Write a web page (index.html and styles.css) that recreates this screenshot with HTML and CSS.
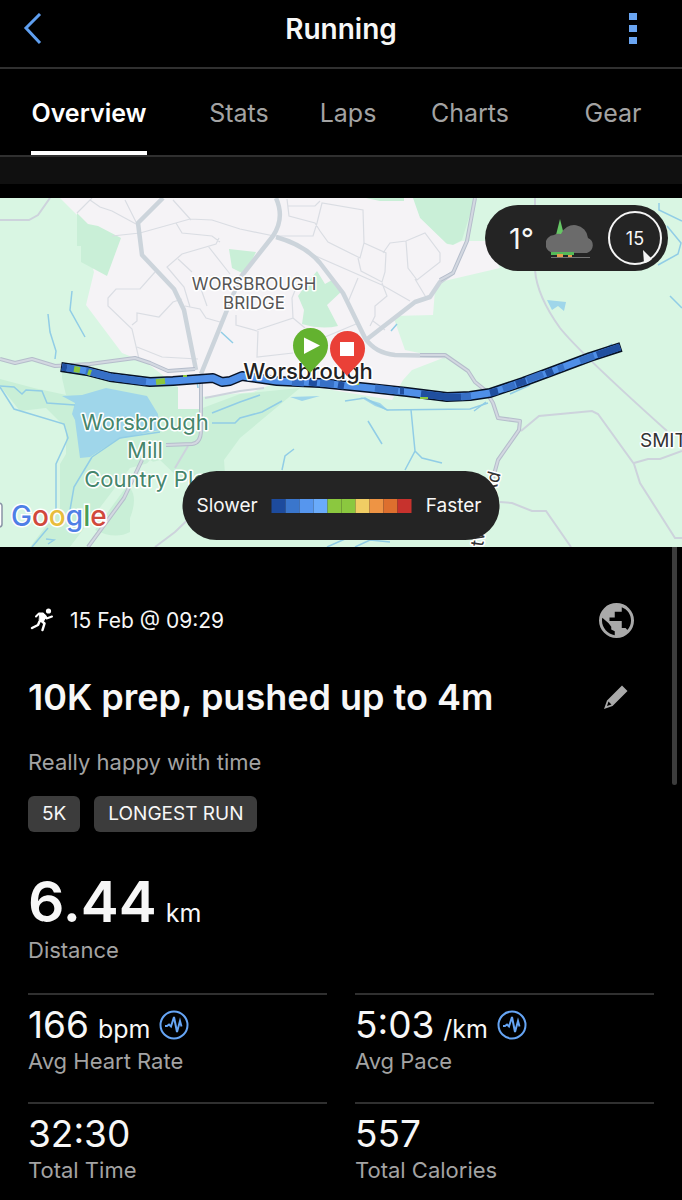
FILE: index.html
```html
<!DOCTYPE html>
<html lang="en">
<head>
<meta charset="utf-8">
<meta name="viewport" content="width=device-width, initial-scale=1">
<title>Running</title>
<link rel="stylesheet" href="styles.css">
</head>
<body>
<header class="topbar">
  <button class="icon-btn" aria-label="Back">
    <svg width="20" height="32" viewBox="0 0 20 32" fill="none" stroke="#5f9ff0" stroke-width="3"><path d="M17 1 3 15l14 15"/></svg>
  </button>
  <h1 class="topbar-title">Running</h1>
  <button class="icon-btn" aria-label="More options">
    <svg width="8" height="32" viewBox="0 0 8 32" fill="#6aa5f2"><path d="M0 0h8v7H0zM0 12h8v7H0zM0 24h8v7H0z"/></svg>
  </button>
</header>

<nav class="tabs" aria-label="Activity sections">
  <a class="tab tab-active" href="#overview" aria-current="page">Overview</a>
  <a class="tab" href="#stats">Stats</a>
  <a class="tab" href="#laps">Laps</a>
  <a class="tab" href="#charts">Charts</a>
  <a class="tab" href="#gear">Gear</a>
</nav>
<div class="strip"></div>

<main id="overview">
  <section class="map" aria-label="Route map">
    <svg class="map-canvas" viewBox="0 0 682 349" preserveAspectRatio="xMidYMid slice">
      <rect width="682" height="349" fill="#d9f6e3"/>
      <!-- woodland -->
      <g fill="#c9efd7">
        <path d="M412 0H475L462 42 453 47 440 44 447 47 420 20Z"/>
        <path d="M0 181 34 190 66 197 62 180 62 172 150 185 178 189V211H200L240 196 300 190 240 240 224 262 226 290H200L150 262 136 278 134 308 126 338 108 334 96 322 108 300 70 349H30L60 310V266L66 256 66 230 46 210 20 213 0 188Z"/>
      </g>
      <path d="M70 349 130 270 160 262 200 300 200 349Z" fill="#d9f6e3"/>
      <path d="M130 320q8-20 0-30l10-20-35 48-10 14q20 10 35 2Z" fill="#c9efd7"/>
      <!-- built-up area -->
      <path fill="#f5f3f6" d="M60 0 77 17 94 74 86 107 122 155 147 165 178 189V211H200V199L253 194 270 187 320 190 392 202 403 182 412 172 443 160 405 152 393 118 433 117 435 92 440 84 500 70 487 43H462L453 47 447 46 420 20 413 0Z"/>
      <g fill="#c9efd7">
        <path d="M77 15 88 26 98 28 121 40 107 78 81 64V48L77 48Z"/>
        <path d="M229 51 256 54 252 62 242 75 232 70Z"/>
        <path d="M317 73 325 86 332 82 343 92 327 107 338 128Q322 132 302 126L304 112 298 98 308 84Z"/>
        <path d="M366 0H404V3H380Z"/>
      </g>
      <!-- lake -->
      <path fill="#9fd6ea" d="M62 198 82 197 106 190 147 198 158 216 160 232 118 241 90 259 80 260 75 222 72 216 75 205Z"/>
      <path fill="#9fd6ea" d="M290 199 320 198 302 203ZM360 199l20 6 9 8-14-5ZM547 102l19 2-2 9-6-5-6 4Z"/>
      <!-- streams -->
      <g fill="none" stroke="#91cde6" stroke-width="1.5">
        <path d="M72 93 70 112 85 139M48 116 50 134 56 153 55 161M221 134 233 145"/>
        <path d="M0 188 14 189 22 196 26 192 42 193 47 205 75 207M0 189 14 211 64 226 68 240 56 266V312M92 259 74 289 70 312M48 330 32 349M46 341l8 1-6 4"/>
        <path d="M160 234 120 240 92 259M212 215 240 204 260 197M212 225 235 225 240 220 262 214 282 203M345 203 365 200 387 212 470 211 488 205M368 223 382 246M411 212 415 253 405 272M415 253 422 260 442 265M282 272 285 258 294 251"/>
        <path d="M659 5v7l23 11M667 28 681 45 678 56 658 67M670 98l12 12M510 196 530 187M592 160 612 146M474 213l12-9M391 133l6-7M196 176l2 14M327 349 345 341M355 349 370 342 390 344"/>
      </g>
      <!-- minor streets -->
      <g fill="none" stroke="#dadde3" stroke-width="1.2">
        <path d="M112 38 140 35 190 21 212 22 240 31 274 38M77 15 92 0M90 2 100 9 112 13 136 26M125 2l12 24M173 2l18 20M176 25l6 10 30 3 8 6M219 40l-3 6-34 10-15 13 17 20 6 20M208 48l22 28M155 74 140 91H116L108 100V108L132 131 139 161M132 127l5-4v-8l22 4 14-15 9-3M185 108l15 3 6 9 14 4M137 149l25 10 36 2M178 61l14 13M201 91l6 17"/>
        <path d="M287 1 289 18 315 25 320 33 328 44 360 60 364 45 363 12 322 5 317 25 313 38H275M288 8H315L320 3M364 45 386 55 385 74 382 84 361 73 358 60M383 55 390 45 406 43 425 35 440 55V64L417 82 408 70 406 43M415 81 427 101M311 56 382 87 410 103M358 80 348 104M382 85 387 98 375 108V118L370 128M258 133 257 159 293 155M257 132 293 120 292 100 298 85M236 117v10l21 6M373 123l12 9M293 120l12 10M325 139l31-13"/>
      </g>
      <g fill="none" stroke="#cdd3dc" stroke-width="2">
        <path d="M535 0V72Q537 98 560 130 580 155 667 233"/>
        <path d="M521 233 539 218 592 213 598 216 634 266 640 285 675 340H682M634 265 648 261 660 261 682 253M500 304 512 305 532 313H546L571 349"/>
        <path d="M0 22H29L38 17 50 0M155 349 175 334 200 310M175 270 188 248M205 200 240 193 264 190"/>
      </g>
      <!-- main roads -->
      <g fill="none" stroke="#ccd4db" stroke-width="4.5" stroke-linejoin="round">
        <path d="M163 0 138 25 142 57 174 91 184 112 196 172M276 0Q285 20 273 38L240 80 201 176M276 39Q305 47 320 65L343 95 365 140Q375 155 395 157L445 158M366 142 415 104 430 99 440 84 454 74"/>
      </g>
      <g fill="none" stroke="#b5bdcb" stroke-width="4" stroke-linejoin="round">
        <path d="M0 161 15 165 32 161 55 168 90 166 135 160 150 165 168 173 195 171M475 0 467 43 453 75 440 82M420 157H445L468 173 475 184 485 192 493 205 498 220 520 223 519 232 498 262 493 280M201 178 201 232Q201 245 192 246L166 247M142 262 124 300 88 349"/>
      </g>
      <g fill="none" stroke="#d3d8e1" stroke-width="2" stroke-linejoin="round">
        <path d="M0 161 15 165 32 161 55 168 90 166 135 160 150 165 168 173 195 171M475 0 467 43 453 75 440 82M420 157H445L468 173 475 184 485 192 493 205 498 220 520 223 519 232 498 262 493 280M201 178 201 232Q201 245 192 246L166 247M142 262 124 300 88 349"/>
      </g>
      <!-- recorded route -->
      <g fill="none" stroke-linejoin="round">
        <path stroke="#071226" stroke-width="10" d="M61 169 87 173 110 179 150 184 173 183 213 180 222 184 230 183 242 178 277 183 320 185 370 190 407 194 447 199 470 198 490 195 523 184 550 174 590 159 621 149"/>
        <path stroke="#4f8fe8" stroke-width="7" d="M62 169 87 173 110 179 150 184 173 183 213 180 222 184 230 183 242 178 277 183 320 185 370 190 407 194 447 199 470 198 490 195 523 184 550 174 590 159 620 149"/>
        <path stroke="#204f9f" stroke-width="7" d="M62 169l5 1M309 184l8 1M338 187l6 1M400 193l4 0M421 196l26 3 14 0M490 195l8-2M516 186l10-3M546 176l7-3M597 157l23-8"/>
        <path stroke="#3770c6" stroke-width="7" d="M67 170l8 1M86 173l24 6 36 5M292 184l12 1M320 185l14 1M375 190l23 3M461 199l10-1M503 191l12-4M527 182l16-6M558 171l6-2M580 163l14-5"/>
        <path stroke="#8bc63e" stroke-width="6" d="M74 171l6 1M88 174l3 1M156 184l9-1"/>
        <path stroke="#8bc63e" stroke-width="2" d="M183 178h4M353 186h6M420 200h8"/>
      </g>
      <!-- place names -->
      <g class="place">
        <g class="district">
          <text x="254" y="92">WORSBROUGH</text>
          <text x="254" y="111">BRIDGE</text>
        </g>
        <text class="district-cut" x="640" y="249">SMIT</text>
        <text class="town" x="308" y="181">Worsbrough</text>
        <g class="park">
          <text x="145" y="232">Worsbrough</text>
          <text x="145" y="260">Mill</text>
          <text x="145" y="289">Country Plc</text>
        </g>
        <text class="road-name" transform="translate(495 297) rotate(-75)">Rd</text>
        <text class="road-name" transform="translate(483 349) rotate(-82)">tw</text>
      </g>
      <!-- start and finish pins -->
      <path fill="#63b22f" d="M310 175 298 161Q293 155 293 147.500A17.500 17.500 0 0 1 328 147.500Q328 155 323 161Z"/>
      <path fill="#fff" d="M304 139.500 320 147.500 304 156Z"/>
      <path fill="#ea4037" d="M347 178 335 164Q330 158 330 150.500A17.500 17.500 0 0 1 365 150.500Q365 158 360 164Z"/>
      <path fill="#fff" d="M340 144h14v14h-14z"/>
      <rect x="-10" y="305" width="12" height="24" rx="3" fill="#fff" stroke="#8a94a6" stroke-width="1.500"/>
      <text class="brand" x="11" y="328"><tspan fill="#4f7fe6">G</tspan><tspan fill="#d0493c">o</tspan><tspan fill="#e8bd3c">o</tspan><tspan fill="#4f7fe6">g</tspan><tspan fill="#4a9e55">l</tspan><tspan fill="#d0493c">e</tspan></text>
    </svg>

    <div class="weather">
      <span class="temp">1°</span>
      <svg width="50" height="42" viewBox="0 0 50 42">
        <path fill="#66c765" d="M10 18 14 2 18 18Z"/>
        <path fill="#6b6b6b" d="M9 36A9 9 0 0 1 8 18Q11 16 15 17A14 14 0 0 1 42 21 8 8 0 0 1 41 36Z"/>
        <path fill="#55b958" d="M5 35H28V38H5Z"/>
        <path fill="#e69b4d" d="M11 37h6v3h-6zM22 38h4v2h-4z"/>
        <path fill="#747474" d="M5 40h39v1H5z"/>
      </svg>
      <span class="wind">15
        <svg class="wind-arrow" width="12" height="14" viewBox="0 0 12 14"><path fill="#f5f5f5" d="M2 0 11 9Q7 13 3 13Z"/></svg>
      </span>
    </div>

    <div class="legend">
      <span>Slower</span>
      <span class="scale"><i class="c1"></i><i class="c2"></i><i class="c3"></i><i class="c4"></i><i class="c5"></i><i class="c5"></i><i class="c6"></i><i class="c7"></i><i class="c8"></i><i class="c9"></i></span>
      <span>Faster</span>
    </div>
  </section>

  <section class="details">
    <div class="scroll-thumb"></div>
    <div class="row row-meta">
      <svg width="28" height="28" viewBox="0 0 28 28" fill="none" stroke="#fff" stroke-linecap="round" stroke-linejoin="round">
        <circle cx="20.500" cy="5" r="2.600" fill="#fff" stroke="none"/>
        <path fill="#fff" stroke-width="1" d="M12 7.500 17 8.500 18.500 10.500 15 16 11.500 14.500Z"/>
        <path stroke-width="2" d="M8 10.500 11 7.500H15L18.500 12.500 24 10.500"/>
        <path stroke-width="2.500" d="M12.500 14 16.500 17.500 14.500 24M11.500 15.500 10 19 4 22"/>
      </svg>
      <time class="date" datetime="02-15T09:29">15 Feb @ 09:29</time>
      <button class="icon-btn row-action" aria-label="Privacy: everyone">
        <svg width="35" height="35" viewBox="2 2 20 20" fill="#a9a9a9"><path d="M12 2a10 10 0 1 0 0 20 10 10 0 0 0 0-20zm-1 18.400C7 19.800 3.700 16.100 3.700 12c0-.6.1-1.100.2-1.600L7.500 13.500 9 15.500v1.700l2 1zM18.200 17.400 17.200 16.300H15v-4H8v-2h3V7h4V4.400c3.200 1.200 5.300 4 5.300 7.600 0 2.100-.8 4-2.100 5.400z"/></svg>
      </button>
    </div>
    <div class="row row-title">
      <h2 class="title">10K prep, pushed up to 4m</h2>
      <button class="icon-btn row-action" aria-label="Edit title">
        <svg width="24" height="24" viewBox="0 0 24 24" fill="#a9a9a9"><path fill-rule="evenodd" d="M0 24 3 15.500 18 .5 23.500 6 8.500 21ZM3 21 7.500 19.500 4.500 16.500Z"/></svg>
      </button>
    </div>
    <p class="note">Really happy with time</p>
    <ul class="tags">
      <li class="tag">5K</li>
      <li class="tag">LONGEST RUN</li>
    </ul>
    <div class="distance">
      <p class="distance-value">6.44 <span class="unit">km</span></p>
      <p class="label">Distance</p>
    </div>
    <div class="stats">
      <div class="stat">
        <p class="value">166 <span class="unit">bpm</span>
          <svg class="pulse" width="30" height="30" viewBox="0 0 30 30"><circle cx="15" cy="15" r="13.500"/><path d="M6 16h2l2-1.500 2 2L15 7l3 15 3-11 1.500 5.500"/></svg></p>
        <p class="label">Avg Heart Rate</p>
      </div>
      <div class="stat">
        <p class="value">5:03 <span class="unit">/km</span>
          <svg class="pulse" width="30" height="30" viewBox="0 0 30 30"><circle cx="15" cy="15" r="13.500"/><path d="M6 16h2l2-1.500 2 2L15 7l3 15 3-11 1.500 5.500"/></svg></p>
        <p class="label">Avg Pace</p>
      </div>
      <div class="stat">
        <p class="value">32:30</p>
        <p class="label">Total Time</p>
      </div>
      <div class="stat">
        <p class="value">557</p>
        <p class="label">Total Calories</p>
      </div>
    </div>
  </section>
</main>
</body>
</html>
```

FILE: styles.css
```css
* { box-sizing: border-box; }
body {
  margin: 0;
  background: #000;
  color: #f7f7f7;
  font-family: Inter, "Liberation Sans", sans-serif;
}
h1, h2, p, ul { margin: 0; padding: 0; }

.icon-btn {
  display: flex;
  align-items: center;
  justify-content: center;
  width: 40px;
  height: 40px;
  padding: 0;
  border: 0;
  background: none;
}

.topbar {
  display: grid;
  grid-template-columns: 1fr auto 1fr;
  align-items: center;
  height: 69px;
  padding: 0 29px 10px 13px;
  border-bottom: 2px solid #303030;
}
.topbar { padding-left: 29px; }
.topbar .icon-btn:first-child { margin-left: -16px; }
.topbar .icon-btn:last-child { justify-self: end; }
.topbar-title {
  font-size: 28px;
  line-height: 36px;
  font-weight: 600;
}

.tabs {
  display: grid;
  grid-template-columns: 178fr 122fr 96fr 148fr 138fr;
  height: 88px;
  border-bottom: 2px solid #303030;
  justify-items: center;
}
.tab {
  padding-top: 28px;
  color: #a3a3a3;
  font-size: 25px;
  line-height: 32px;
  text-decoration: none;
}
.tab-active {
  color: #fff;
  font-weight: 600;
  border-bottom: 4px solid #fff;
}
.strip {
  height: 41px;
  background: #101010;
  border-bottom: 14px solid #000;
}

.map { position: relative; }
.map-canvas { display: block; width: 100%; height: auto; }
.place text {
  paint-order: stroke;
  stroke: #fff;
  stroke-width: 3px;
  stroke-linejoin: round;
}
.district { font-size: 17px; fill: #555; text-anchor: middle; }
.district-cut { font-size: 19px; fill: #333; }
.town { font-size: 22px; font-weight: 500; fill: #222; text-anchor: middle; }
.park { font-size: 22px; fill: #46866c; text-anchor: middle; }
.road-name { font-size: 18px; fill: #333; }
.brand {
  font-size: 28px;
  font-weight: 500;
  paint-order: stroke;
  stroke: #fff;
  stroke-width: 3px;
}

.weather {
  position: absolute;
  top: 7px;
  right: 14px;
  display: flex;
  align-items: center;
  gap: 12px;
  height: 66px;
  padding: 0 6px 0 24px;
  border-radius: 33px;
  background: #242424;
}
.temp { font-size: 29px; }
.wind {
  position: relative;
  display: flex;
  align-items: center;
  justify-content: center;
  width: 54px;
  height: 54px;
  border: 2px solid #f5f5f5;
  border-radius: 50%;
  font-size: 18px;
}
.wind-arrow { position: absolute; right: 7px; bottom: -1px; }

.legend {
  position: absolute;
  bottom: 7px;
  left: 50%;
  transform: translateX(-50%);
  display: flex;
  align-items: center;
  gap: 14px;
  height: 69px;
  padding: 0 18px 0 14px;
  border-radius: 34px;
  background: #242424;
  font-size: 19px;
}
.scale { display: flex; }
.scale i { width: 14px; height: 14px; }
.c1 { background: #1d4b9d; }
.c2 { background: #3a76cc; }
.c3 { background: #5696ee; }
.c4 { background: #6aabfa; }
.c5 { background: #8bc83f; }
.c6 { background: #f0cd64; }
.c7 { background: #ee9444; }
.c8 { background: #dd6f2e; }
.c9 { background: #c7322d; }

.details {
  position: relative;
  padding: 53px 28px 16px;
}
.scroll-thumb {
  position: absolute;
  top: 0;
  right: 5px;
  width: 5px;
  height: 238px;
  border-radius: 0 0 3px 3px;
  background: #3c3c3c;
}
.row { display: flex; align-items: center; }
.row-action { margin-left: auto; margin-right: 18px; }
.row-meta { gap: 14px; }
.date { font-size: 21px; }
.row-title { padding-top: 37px; }
.title { font-size: 36px; line-height: 40px; font-weight: 600; }
.note {
  margin-top: 31px;
  color: #a3a3a3;
  font-size: 22px;
  line-height: 28px;
}
.tags {
  display: flex;
  gap: 14px;
  margin-top: 20px;
  list-style: none;
}
.tag {
  padding: 0 14px;
  border-radius: 6px;
  background: #3c3c3c;
  font-size: 19px;
  line-height: 36px;
}
.distance { margin-top: 38px; }
.distance-value,
.value {
  display: flex;
  align-items: baseline;
  gap: 9px;
}
.distance-value { font-size: 57px; line-height: 64px; font-weight: 600; }
.unit { font-size: 25px; line-height: 28px; font-weight: 400; }
.label {
  color: #a3a3a3;
  font-size: 22px;
  line-height: 32px;
}
.stats {
  display: grid;
  grid-template-columns: 1fr 1fr;
  column-gap: 28px;
  margin-top: 27px;
}
.stat {
  padding: 10px 0 25px;
  border-top: 2px solid #303030;
}
.value { font-size: 37px; line-height: 40px; }
.pulse {
  align-self: center;
  fill: none;
  stroke: #66a5f5;
  stroke-width: 2;
}
```
